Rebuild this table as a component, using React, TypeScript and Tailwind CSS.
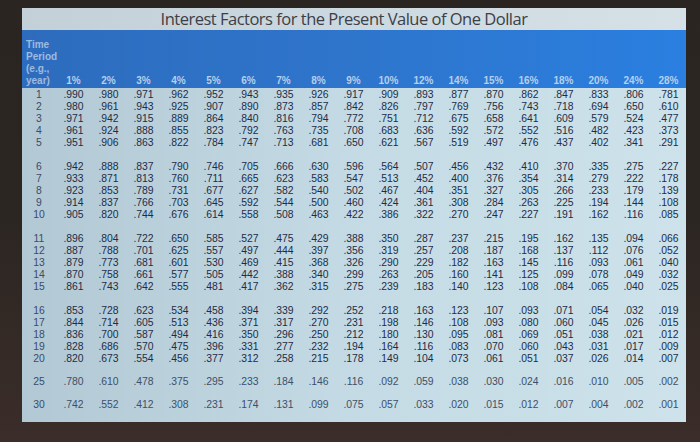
const RATES = [1, 2, 3, 4, 5, 6, 7, 8, 9, 10, 12, 14, 15, 16, 18, 20, 24, 28];
const GROUPS = [
  [1, 2, 3, 4, 5],
  [6, 7, 8, 9, 10],
  [11, 12, 13, 14, 15],
  [16, 17, 18, 19, 20],
  [25],
  [30],
];

function factor(rate: number, year: number): string {
  return Math.pow(1 + rate / 100, -year).toFixed(3).replace(/^0/, "");
}

const GRID = "grid grid-cols-[34px_repeat(18,35px)]";

export default function App() {
  return (
    <div className="h-[442px] w-[700px] overflow-hidden bg-gradient-to-b from-[#2a2521] via-[#2c2622] to-[#3b2d29] pl-[22px] pt-[8px] font-['Liberation_Sans',sans-serif]">
      <div className="w-[664px] overflow-hidden">
        <div className="flex h-[22px] items-center justify-center bg-gradient-to-r from-[#c3d0d8] to-[#d6e1e7] pr-[20px]">
          <h1 className="font-['Open_Sans',sans-serif] text-[16.5px] leading-none tracking-[-0.5px] text-[#3b4048]">
            Interest Factors for the Present Value of One Dollar
          </h1>
        </div>

        <div className={`${GRID} h-[58px] items-end bg-gradient-to-r from-[#2d6cbd] via-[#2e75cc] to-[#2a7fe0] pb-[1px]`}>
          <div className="pl-[4px] text-[10px] font-bold leading-[12px] text-[#9dbbe0]">
            <p>Time</p>
            <p>Period</p>
            <p>(e.g.,</p>
            <p>year)</p>
          </div>
          {RATES.map((rate) => (
            <div key={rate} className="text-center text-[10px] font-bold leading-[12px] text-[#b6cfec]">
              {rate}%
            </div>
          ))}
        </div>

        <div className="flex h-[334px] flex-col gap-[12px] bg-gradient-to-r from-[#b2c9d5] via-[#c4dbe5] to-[#cde2ea] pt-[1px]">
          {GROUPS.map((years, gi) => (
            <div key={gi} className={gi >= 4 ? "-mt-[1px]" : ""}>
              {years.map((year) => (
                <div
                  key={year}
                  className={`${GRID} h-[12px] items-center text-[10.4px] leading-[12px] ${
                    gi >= 4 ? "text-[#3d4f6a]" : "text-[#1e2c48]"
                  }`}
                >
                  <div className="text-center text-[#3b4b68]">{year}</div>
                  {RATES.map((rate) => (
                    <div key={rate} className="text-center">
                      {factor(rate, year)}
                    </div>
                  ))}
                </div>
              ))}
            </div>
          ))}
        </div>
      </div>
    </div>
  );
}
